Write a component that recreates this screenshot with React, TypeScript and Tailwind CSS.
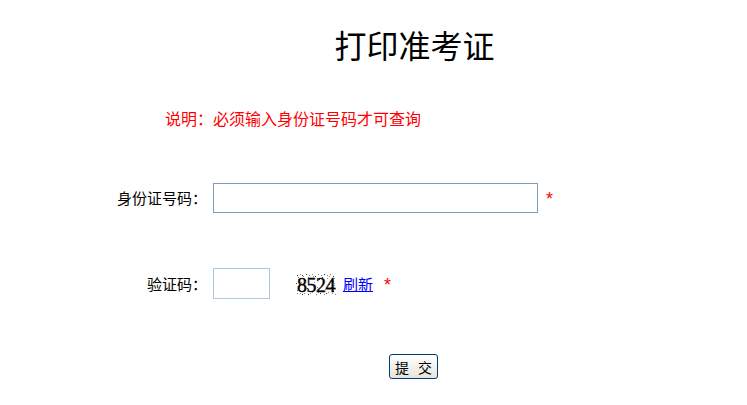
import React from "react";

const dots: [number, number][] = [
  [1, 2], [4, 1], [7, 3], [10, 1], [13, 2], [16, 1], [19, 3], [22, 1], [25, 2], [28, 1], [31, 2], [34, 1], [37, 3],
  [2, 6], [5, 9], [3, 13], [1, 17], [4, 20], [36, 6], [38, 10], [35, 14], [37, 18], [39, 21],
  [8, 20], [12, 21], [16, 19], [20, 21], [24, 20], [28, 21], [32, 19],
  [9, 7], [14, 5], [18, 9], [23, 6], [27, 8], [31, 5], [11, 15], [21, 14], [29, 16], [6, 11], [33, 11],
  [2, 4], [6, 2], [12, 4], [17, 3], [26, 4], [33, 3], [38, 5], [0, 10], [39, 15], [1, 20], [6, 21], [14, 20],
  [22, 19], [30, 20], [36, 20], [3, 8], [37, 8], [2, 15], [38, 12],
];

function Captcha() {
  return (
    <div className="relative w-[40px] h-[22px] flex items-center justify-center bg-white">
      <svg className="absolute inset-0" width="40" height="22" viewBox="0 0 40 22">
        {dots.map(([x, y], i) => (
          <rect key={i} x={x} y={y} width="1" height="1" fill={i % 3 === 0 ? "#333" : "#888"} />
        ))}
      </svg>
      <span className="relative font-['Liberation_Serif',serif] text-[20px] leading-none text-black tracking-[-0.5px] translate-y-[1px] [-webkit-text-stroke:0.4px_black]">
        8524
      </span>
    </div>
  );
}

function Star() {
  return (
    <span className="font-['Liberation_Sans',sans-serif] text-[18px] leading-none text-[#ff0000] translate-y-[4px]">*</span>
  );
}

export default function App() {
  return (
    <div className="w-[747px] h-[405px] bg-white font-['Noto_Sans_CJK_SC',sans-serif] text-black">
      <div className="pt-[28px] pl-[82px] flex justify-center">
        <h1 className="text-[32px] leading-[32px] font-normal">打印准考证</h1>
      </div>

      <div className="mt-[48px] pl-[165px] text-[16px] leading-[20px] text-[#ff0000]">
        说明：必须输入身份证号码才可查询
      </div>

      <div className="mt-[55px] flex items-center h-[30px]">
        <div className="w-[207px] text-right text-[15px] leading-[20px]">身份证号码：</div>
        <input className="ml-[6px] w-[325px] h-[30px] border border-[#7f9db9] outline-none px-1" />
        <span className="ml-[8px]">
          <Star />
        </span>
      </div>

      <div className="mt-[55px] flex items-center h-[31px]">
        <div className="w-[207px] text-right text-[15px] leading-[20px]">验证码：</div>
        <input className="ml-[6px] w-[57px] h-[31px] border border-[#abc9df] outline-none px-1" />
        <div className="ml-[26px]">
          <Captcha />
        </div>
        <a href="#" className="ml-[7px] text-[15px] leading-[20px] text-[#0000ff] underline">
          刷新
        </a>
        <span className="ml-[11px]">
          <Star />
        </span>
      </div>

      <div className="mt-[55px] pl-[80px] flex justify-center">
        <button className="w-[49px] h-[25px] rounded-[3px] border border-[#003c74] bg-gradient-to-b from-white to-[#e6e5dc] text-[14px] leading-none tracking-[3px] pl-[3px]">
          提 交
        </button>
      </div>
    </div>
  );
}
